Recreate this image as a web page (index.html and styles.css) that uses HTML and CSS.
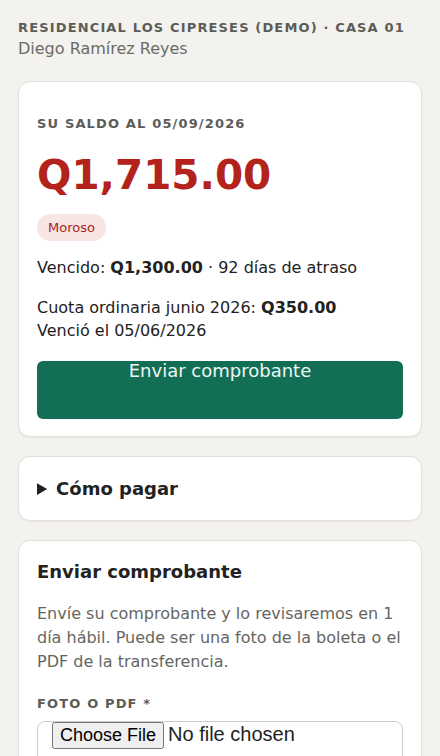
FILE: index.html
```html
<!DOCTYPE html>
<html lang="es">

<head>
    <meta charset="UTF-8">
    <title>Mi saldo - Residencial Los Cipreses</title>
    <link rel="stylesheet" href="styles.css">
</head>

<body>
    <div class="container">
        <header class="top">
            <p class="eyebrow">Residencial Los Cipreses (Demo) · Casa 01</p>
            <p class="owner">Diego Ramírez Reyes</p>
        </header>

        <section class="card saldo-card">
            <p class="label saldo">Su saldo al 05/09/2026</p>
            <p class="amount">Q1,715.00</p>
            <div class="status">
                <span class="badge">Moroso</span>
            </div>
            <p class="line">Vencido: <strong>Q1,300.00</strong> · 92 días de atraso</p>
            <p class="line gap">Cuota ordinaria junio 2026: <strong>Q350.00</strong><br>Venció el 05/06/2026</p>
            <a class="btn" href="#comprobante">Enviar comprobante</a>
        </section>

        <details class="card howto">
            <summary>Cómo pagar</summary>
        </details>

        <section class="card" id="comprobante">
            <h2>Enviar comprobante</h2>
            <p class="muted">Envíe su comprobante y lo revisaremos en 1 día hábil. Puede ser una foto de la boleta o el PDF de la transferencia.</p>
            <label class="label" for="archivo">Foto o PDF *</label>
            <input type="file" id="archivo" class="file">
        </section>
    </div>
</body>

</html>
```

FILE: styles.css
```css
body {
    margin: 0;
    padding: 0;
    font-family: 'DejaVu Sans', sans-serif;
    background-color: #f3f2ee;
    color: #222;
}

.container {
    padding: 18px 18px 40px;
}

p {
    margin: 0;
}

.top {
    margin-bottom: 21px;
}

.eyebrow {
    font-size: 13px;
    font-weight: bold;
    letter-spacing: 1.15px;
    text-transform: uppercase;
    color: #5c5c57;
    line-height: 20px;
}

.owner {
    font-size: 16px;
    color: #6b6b66;
    line-height: 22px;
}

.card {
    display: block;
    background-color: #fff;
    border: 1px solid #e2dfda;
    border-radius: 12px;
    padding: 24px 18px 18px;
    margin-bottom: 19px;
    box-shadow: 0 1px 2px rgba(0, 0, 0, 0.05);
}

.saldo-card {
    padding-bottom: 17px;
}

.label {
    display: block;
    font-size: 13px;
    font-weight: bold;
    letter-spacing: 1.15px;
    text-transform: uppercase;
    color: #5c5c57;
    line-height: 22px;
}

.saldo {
    margin-top: 7px;
}

.amount {
    font-size: 40.5px;
    font-weight: bold;
    color: #b3221b;
    line-height: 48px;
    margin: 16px 0 15px;
}

.status {
    display: flex;
}

.badge {
    font-size: 13px;
    color: #a8261e;
    background-color: #f6e5e3;
    padding: 5px 11px;
    border-radius: 14px;
    line-height: 17px;
}

.line {
    font-size: 16px;
    line-height: 23px;
    margin-top: 15px;
}

.line.gap {
    margin-top: 17px;
}

.btn {
    display: block;
    margin-top: 19px;
    height: 58px;
    background-color: #136e56;
    color: #eef6f2;
    border-radius: 6px;
    text-align: center;
    text-decoration: none;
    font-size: 18px;
    line-height: 20px;
}

.howto {
    padding: 21px 18px 20px;
    margin-bottom: 19px;
}

.howto summary {
    font-size: 18px;
    font-weight: bold;
    line-height: 22px;
    cursor: pointer;
}

h2 {
    font-size: 18px;
    margin: -4px 0 19px;
    line-height: 22px;
}

.muted {
    font-size: 16px;
    line-height: 24px;
    color: #666661;
    margin-bottom: 19px;
}

.file {
    display: block;
    width: 100%;
    box-sizing: border-box;
    margin-top: 6px;
    font-family: 'Liberation Sans', Arial, sans-serif;
    font-size: 20px;
    padding: 0 14px;
    height: 44px;
    border: 1px solid #ccc;
    border-radius: 8px;
    background-color: #fff;
}

.file::file-selector-button {
    font-family: 'Liberation Sans', Arial, sans-serif;
    font-size: 18px;
}
```
